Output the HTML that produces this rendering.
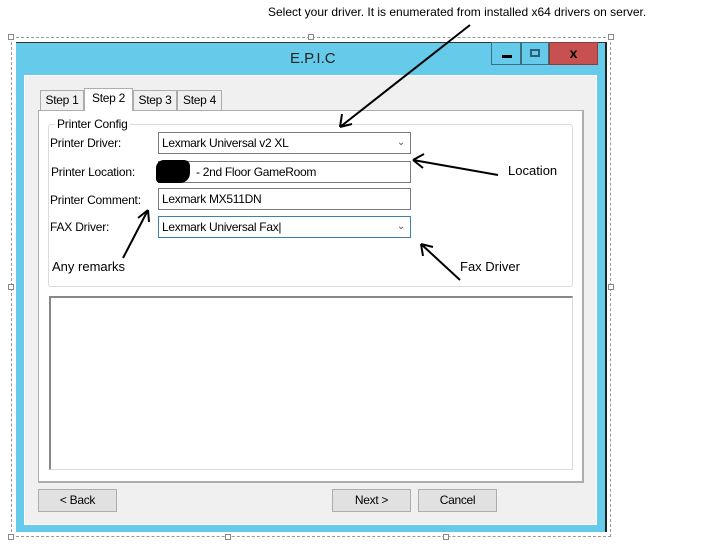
<!DOCTYPE html>
<html><head><style>
*{margin:0;padding:0;box-sizing:border-box}
body{width:715px;height:558px;background:#fff;position:relative;font-family:"Liberation Sans",sans-serif;overflow:hidden}
.a{position:absolute}
.t{font-size:12px;color:#000;white-space:nowrap}
.inp{position:absolute;background:#fff;border:1px solid #7a7a7a;font-size:12px;padding:3px 0 0 3px;letter-spacing:-0.3px}
.btn{position:absolute;background:#e1e1e1;border:1px solid #adadad;font-size:12px;text-align:center;line-height:20px;letter-spacing:-0.3px}
.tab{position:absolute;background:#f0f0f0;border:1px solid #acacac;border-bottom:none;font-size:12px;text-align:center;line-height:19px;letter-spacing:-0.3px}
.lbl{position:absolute;font-size:12px;letter-spacing:-0.2px}
.chev{position:absolute;right:5px;top:4px;font-size:10px;color:#555}
.h{position:absolute;width:6px;height:6px;border:1px solid #888;background:#fff}
</style></head><body>
<div class="a" style="left:11px;top:37px;width:600px;height:500px;border:1px dashed #999"></div>
<div class="h" style="left:8px;top:34px"></div><div class="h" style="left:308px;top:34px"></div><div class="h" style="left:608px;top:34px"></div>
<div class="h" style="left:8px;top:284px"></div><div class="h" style="left:608px;top:284px"></div>
<div class="h" style="left:8px;top:534px"></div><div class="h" style="left:225px;top:534px"></div><div class="h" style="left:443px;top:534px"></div>
<div class="a" style="left:16px;top:42px;width:591px;height:490px;background:#66cbea;border-right:2px solid #222;border-top:1px solid #333"></div>
<div class="a" style="left:290px;top:50px;font-size:15px;color:#222">E.P.I.C</div>
<div class="a" style="left:491px;top:42px;width:30px;height:23px;background:#66cbea;border:1px solid #3c6e80"><div class="a" style="left:10px;top:12px;width:10px;height:3px;background:#000"></div></div>
<div class="a" style="left:521px;top:42px;width:28px;height:23px;background:#66cbea;border:1px solid #3c6e80"><div class="a" style="left:8px;top:6px;width:10px;height:8px;border:2px solid #2d5f78"></div></div>
<div class="a" style="left:549px;top:42px;width:49px;height:23px;background:#c75050;border:1px solid #8c3a3a;text-align:center;font-weight:bold;font-size:14px;line-height:20px">x</div>
<div class="a" style="left:24px;top:75px;width:573px;height:450px;background:#f0f0f0;border:1px solid #fff"></div>
<div class="tab" style="left:40px;top:90px;width:44px;height:20px">Step 1</div>
<div class="tab" style="left:133px;top:90px;width:44px;height:20px">Step 3</div>
<div class="tab" style="left:177px;top:90px;width:45px;height:20px">Step 4</div>
<div class="a" style="left:38px;top:110px;width:546px;height:373px;background:#fff;border:1px solid #adadad;border-right-width:2px;border-bottom-width:2px"></div>
<div class="tab" style="left:84px;top:88px;width:49px;height:23px;background:#fff;border-color:#adadad">Step 2</div>
<div class="a" style="left:48px;top:124px;width:525px;height:163px;border:1px solid #dcdcdc;border-radius:3px"></div>
<div class="lbl" style="left:55px;top:117px;background:#fff;padding:0 2px">Printer Config</div>
<div class="lbl" style="left:50px;top:136px">Printer Driver:</div>
<div class="lbl" style="left:51px;top:165px">Printer Location:</div>
<div class="lbl" style="left:50px;top:193px">Printer Comment:</div>
<div class="lbl" style="left:50px;top:220px">FAX Driver:</div>
<div class="inp" style="left:158px;top:132px;width:253px;height:22px">Lexmark Universal v2 XL<span class="chev">&#8964;</span></div>
<div class="inp" style="left:158px;top:161px;width:253px;height:22px;padding-left:37px">- 2nd Floor GameRoom</div>
<div class="a" style="left:156px;top:160px;width:34px;height:23px;background:#000;border-radius:8px 6px 10px 4px"></div>
<div class="inp" style="left:158px;top:188px;width:253px;height:22px">Lexmark MX511DN</div>
<div class="inp" style="left:158px;top:216px;width:253px;height:22px;border-color:#3c7fb1">Lexmark Universal Fax|<span class="chev">&#8964;</span></div>
<div class="a" style="left:49px;top:296px;width:524px;height:174px;border:1px solid #dadada;border-left:2px solid #888;border-top:2px solid #888"></div>
<div class="btn" style="left:38px;top:489px;width:79px;height:23px">&lt; Back</div>
<div class="btn" style="left:332px;top:489px;width:79px;height:23px">Next &gt;</div>
<div class="btn" style="left:418px;top:489px;width:79px;height:23px">Cancel</div>
<div class="a t" style="left:268px;top:5px">Select your driver. It is enumerated from installed x64 drivers on server.</div>
<div class="a t" style="left:508px;top:163px;font-size:13px">Location</div>
<div class="a t" style="left:460px;top:259px;font-size:13px">Fax Driver</div>
<div class="a t" style="left:52px;top:259px;font-size:13px">Any remarks</div>
<svg class="a" style="left:0;top:0" width="715" height="558" fill="none" stroke="#000" stroke-width="2">
<path d="M470 25 L340 127 M340 127 L342 114 M340 127 L352 124"/>
<path d="M498 175 L413 160 M413 160 L424 154 M413 160 L423 168"/>
<path d="M460 280 L421 244 M421 244 L423 256 M421 244 L433 247"/>
<path d="M123 258 L148 210 M148 210 L138 218 M148 210 L149 222"/>
</svg>
</body></html>
